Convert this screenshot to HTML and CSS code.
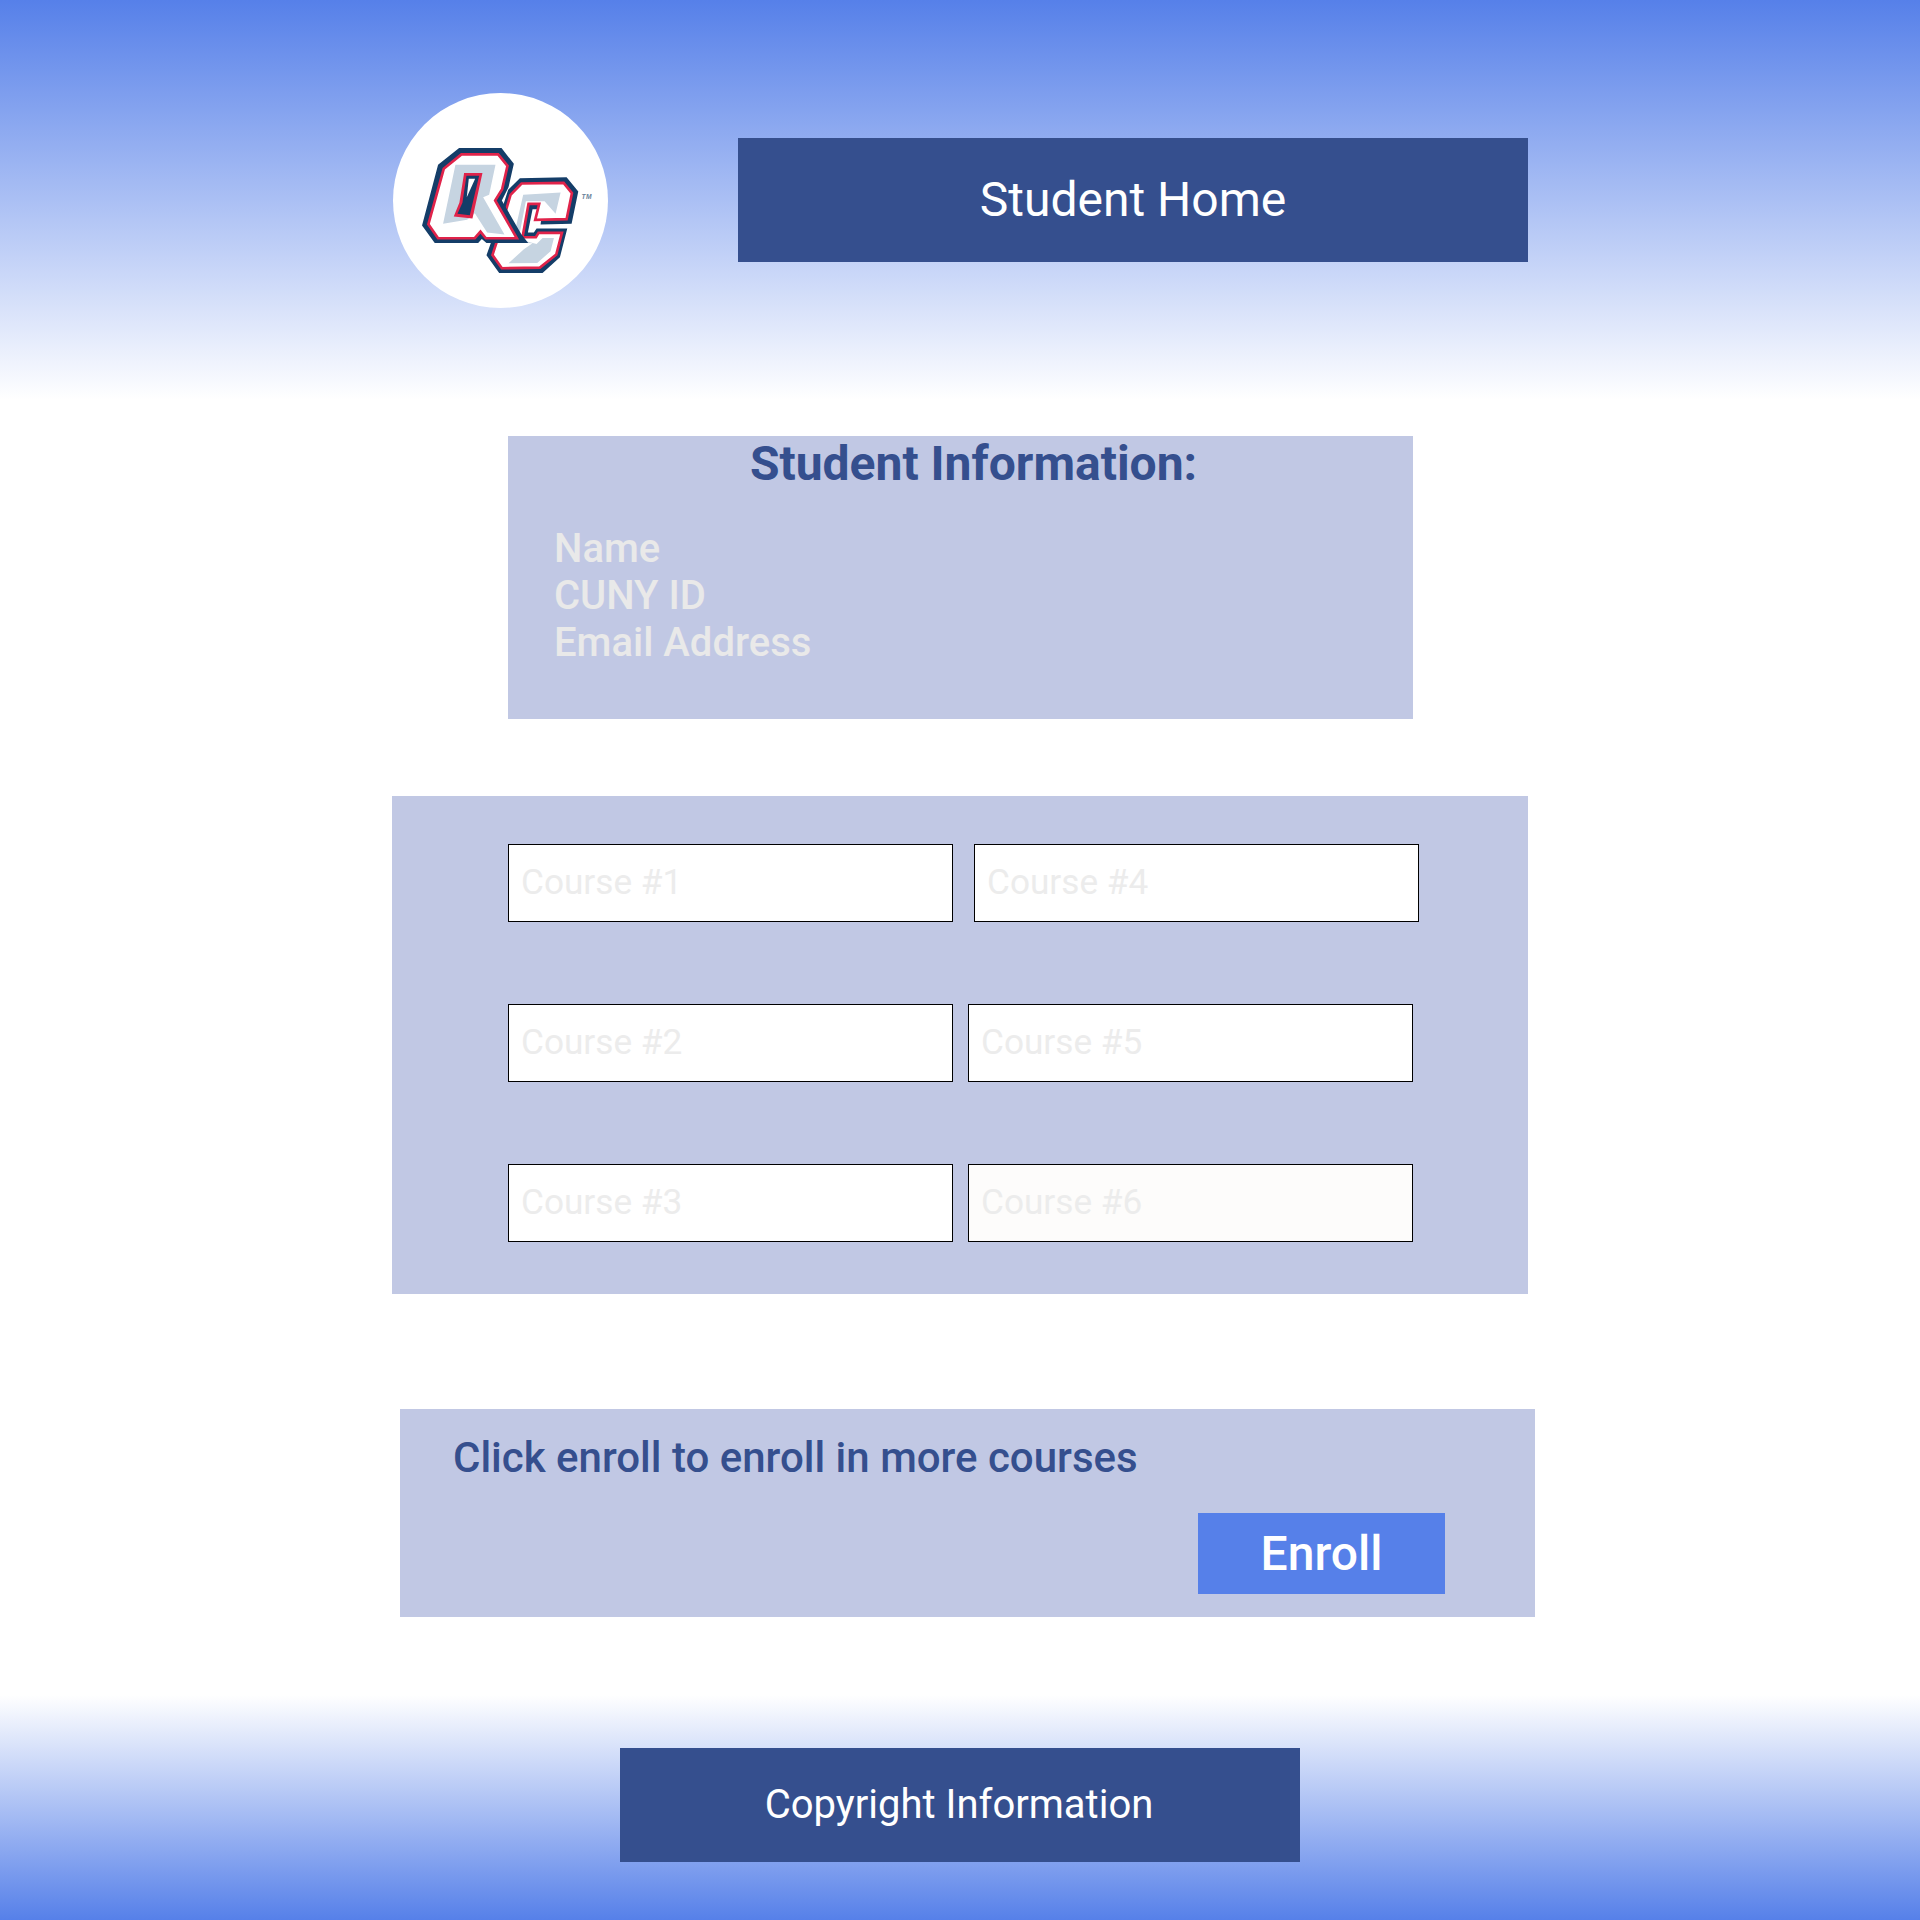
FILE: index.html
```html
<!DOCTYPE html>
<html lang="en">
<head>
    <meta charset="UTF-8">
    <title>Student Home</title>
    <link rel="stylesheet" href="styles.css">
</head>
<body>
    <header class="top-band">
        <div class="logo">
            <svg viewBox="40 40 644 644" width="215" height="215" aria-label="QC logo">
                <!-- C sits behind the Q -->
                <polygon class="logo-navy" points="420,295 560,292 595,335 575,432 482,434 488,388 458,388 444,458 462,458 470,446 562,446 540,532 488,579 358,579 320,526 340,470 385,330"/>
                <polygon class="logo-body" points="425,311 551,309 576,340 560,418 466,420 478,372 446,372 428,472 468,472 476,459 546,459 529,524 480,563 366,565 338,525 352,482 392,345"/>
                <polygon class="logo-gray" points="430,345 542,338 527,402 494,364 438,364 416,478 470,492 488,474 522,474 512,514 472,549 386,550 432,508 458,490 398,486"/>
                <polygon class="logo-navy" points="238,205 365,205 402,252 386,322 366,362 424,462 445,489 320,489 306,477 295,489 165,489 127,437 175,255"/>
                <polygon class="logo-body" points="245,224 355,224 383,258 367,328 346,362 411,475 318,475 302,455 285,475 175,475 146,433 192,267"/>
                <polygon class="logo-gray" points="227,255 347,255 328,345 310,352 374,464 322,458 285,400 262,420 190,432"/>
                <polygon class="logo-red" points="253,280 308,280 278,416 222,410 239,368"/>
                <polygon class="logo-hole" points="260,288 298,288 270,406 233,402 248,369"/>
                <polygon class="logo-white" points="267,297 286,297 261,352"/>
                <text class="logo-tm" x="605" y="358">TM</text>
            </svg>
        </div>
        <div class="page-title">Student Home</div>
    </header>

    <section class="info-panel">
        <h2 class="info-title">Student Information:</h2>
        <div class="info-list">
            <div>Name</div>
            <div>CUNY ID</div>
            <div>Email Address</div>
        </div>
    </section>

    <section class="courses-panel">
        <div class="course-row first-row">
            <div class="course-box">Course #1</div>
            <div class="course-box">Course #4</div>
        </div>
        <div class="course-row">
            <div class="course-box">Course #2</div>
            <div class="course-box">Course #5</div>
        </div>
        <div class="course-row">
            <div class="course-box">Course #3</div>
            <div class="course-box off-white">Course #6</div>
        </div>
    </section>

    <section class="enroll-panel">
        <p class="enroll-text">Click enroll to enroll in more courses</p>
        <button class="enroll-btn" type="button">Enroll</button>
    </section>

    <footer class="bottom-band">
        <div class="copyright">Copyright Information</div>
    </footer>
</body>
</html>
```

FILE: styles.css
```css
/* page */
body {
    margin: 0;
    width: 1920px;
    background-color: #fff;
    font-family: Roboto, sans-serif;
}

/* header */
.top-band {
    display: flex;
    align-items: center;
    gap: 130px;
    height: 400px;
    padding-left: 393px;
    box-sizing: border-box;
    background: linear-gradient(to bottom, #5680e9, #fff);
}

.logo {
    width: 215px;
    height: 215px;
    border-radius: 50%;
    background-color: #fff;
    overflow: hidden;
}

.logo svg {
    display: block;
}

.logo-navy, .logo-hole {
    fill: #143d68;
}

.logo-body {
    fill: #fff;
    stroke: #e0234a;
    stroke-width: 8;
}

.logo-red {
    fill: #e0234a;
}

.logo-gray {
    fill: #c6d4e1;
}

.logo-white {
    fill: #fff;
}

.logo-tm {
    font-family: "Liberation Sans", sans-serif;
    font-size: 20px;
    font-weight: 700;
    font-style: italic;
    letter-spacing: 1px;
    fill: #6a8299;
}

.page-title {
    width: 790px;
    height: 124px;
    padding-bottom: 1px;
    box-sizing: border-box;
    display: flex;
    align-items: center;
    justify-content: center;
    background-color: #354f8e;
    color: #fff;
    font-size: 48px;
}

/* student info */
.info-panel {
    width: 905px;
    height: 283px;
    margin: 36px 0 0 508px;
    background-color: #c1c8e4;
}

.info-title {
    margin: 0;
    padding-left: 26px;
    text-align: center;
    color: #354f8e;
    font-size: 48px;
    line-height: 55px;
    font-weight: 700;
}

.info-list {
    margin-top: 34px;
    padding-left: 46px;
    color: #e9e9e9;
    font-size: 40px;
    font-weight: 500;
}

/* courses */
.courses-panel {
    width: 1136px;
    height: 498px;
    margin: 77px 0 0 392px;
    padding: 48px 0 0 116px;
    box-sizing: border-box;
    background-color: #c1c8e4;
}

.course-row {
    display: flex;
    gap: 15px;
    margin-bottom: 82px;
}

.first-row {
    gap: 21px;
}

.course-box {
    width: 445px;
    height: 78px;
    padding: 0 0 2px 12px;
    box-sizing: border-box;
    display: flex;
    align-items: center;
    background-color: #fff;
    border: 1px solid #000;
    color: #ececec;
    font-size: 35.2px;
}

.off-white {
    background-color: #fdfcfb;
}

/* enroll */
.enroll-panel {
    width: 1135px;
    height: 208px;
    margin: 115px 0 0 400px;
    padding: 24px 90px 0 53px;
    box-sizing: border-box;
    display: flex;
    flex-direction: column;
    background-color: #c1c8e4;
}

.enroll-text {
    margin: 0;
    height: 80px;
    color: #354f8e;
    font-size: 42px;
    font-weight: 500;
}

.enroll-btn {
    align-self: flex-end;
    width: 247px;
    height: 81px;
    padding: 0;
    border: 0;
    background-color: #5680e9;
    color: #fff;
    font-family: inherit;
    font-size: 48px;
    font-weight: 500;
}

/* footer */
.bottom-band {
    display: flex;
    justify-content: center;
    height: 225px;
    margin-top: 78px;
    padding-top: 53px;
    box-sizing: border-box;
    background: linear-gradient(to bottom, #fff, #5680e9);
}

.copyright {
    width: 680px;
    height: 114px;
    padding: 0 2px 1px 0;
    box-sizing: border-box;
    display: flex;
    align-items: center;
    justify-content: center;
    background-color: #354f8e;
    color: #fff;
    font-size: 40px;
}
```
